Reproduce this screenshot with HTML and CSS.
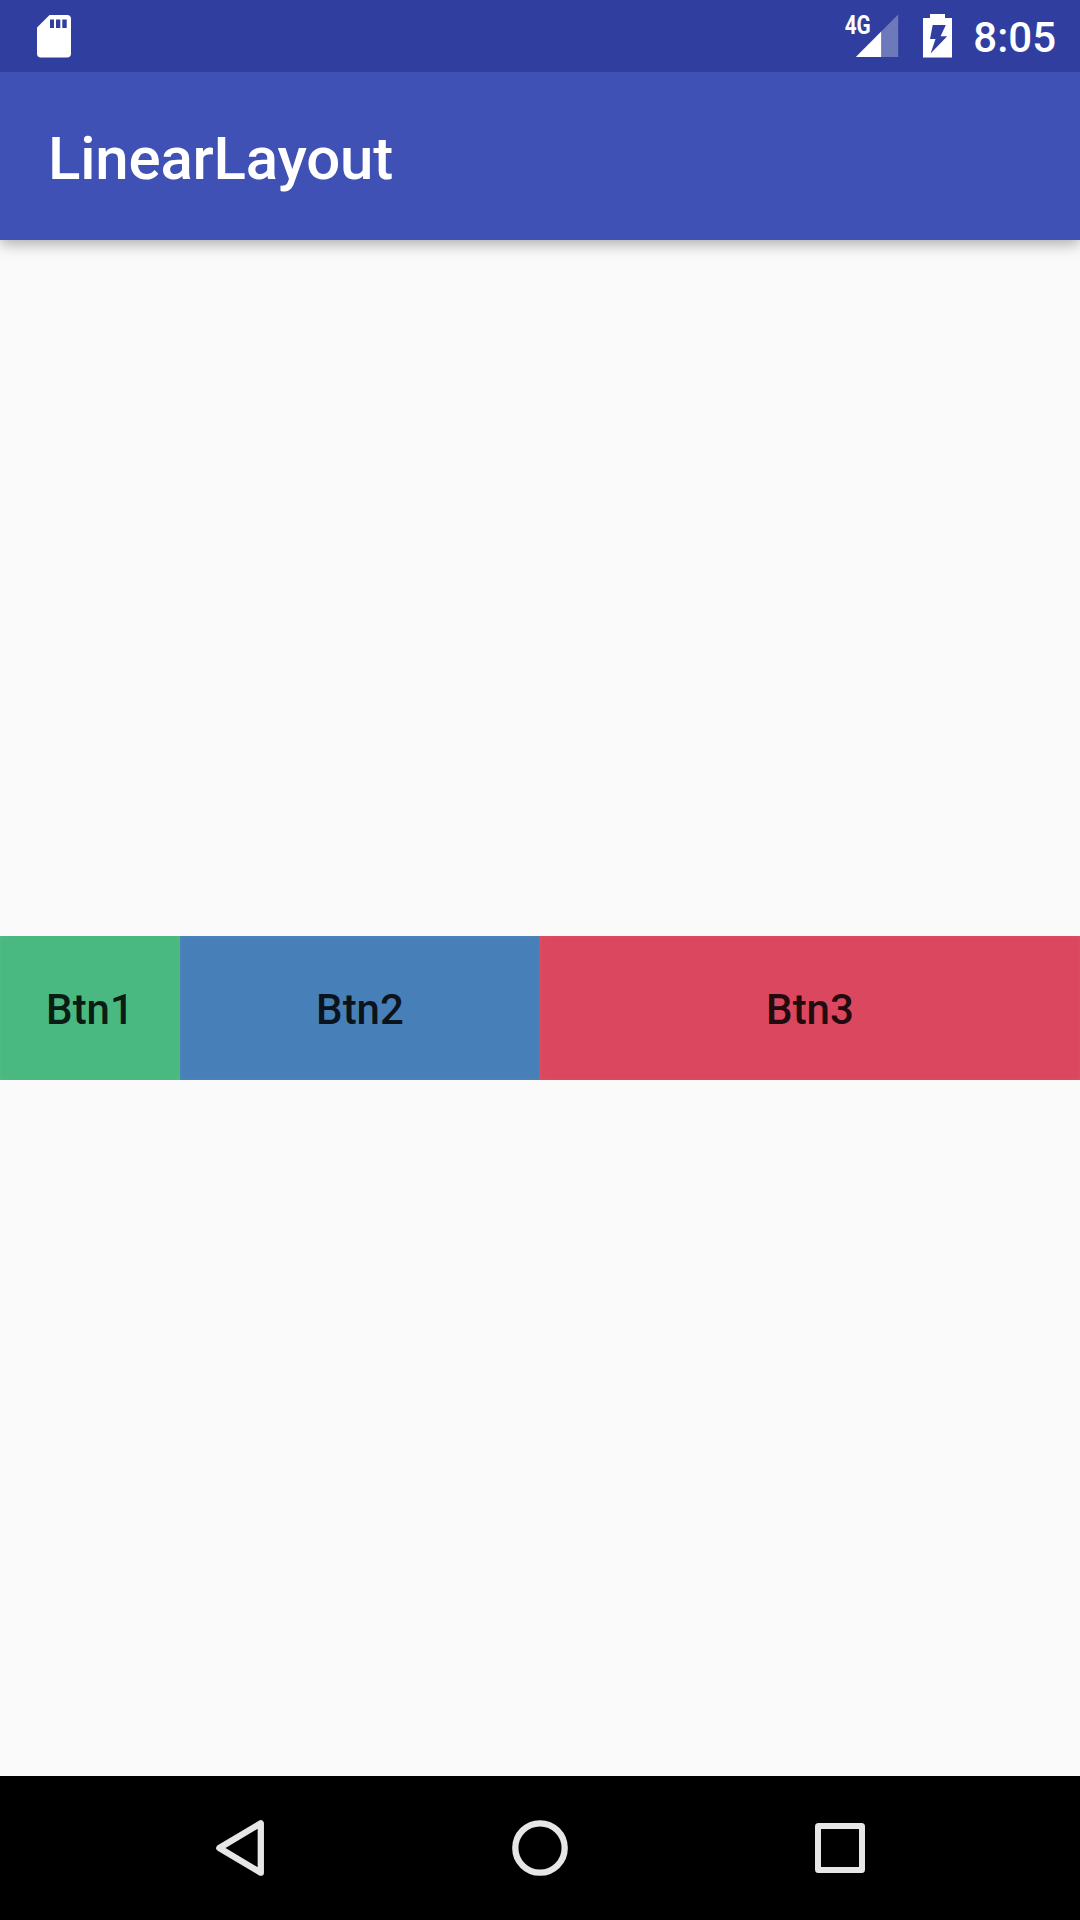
FILE: index.html
```html
<!DOCTYPE html>
<html lang="en">
<head>
<meta charset="utf-8">
<title>LinearLayout</title>
<link rel="stylesheet" href="styles.css">
</head>
<body>
<div class="screen">
  <header class="status-bar">
    <svg class="sd-card" viewBox="0 0 34 43"><path fill-rule="evenodd" d="M12.500 0H30Q34 0 34 4V38.500Q34 42.500 30 42.500H4Q0 42.500 0 38.500V12.500ZM13 4.500V13H17V4.500ZM19 4.500V13H23.300V4.500ZM25.300 4.500V13H29.700V4.500Z"/></svg>
    <div class="indicators">
      <svg class="signal" viewBox="0 0 60 50">
        <path class="signal-off" d="M58.200 6.500V49H41.200V23.500Z"/>
        <path d="M15.800 49L41.200 23.500V49Z"/>
        <text class="network" x="4.700" y="26" textLength="26" lengthAdjust="spacingAndGlyphs">4G</text>
      </svg>
      <svg class="battery" viewBox="0 0 29 44"><path fill-rule="evenodd" d="M7 0H22V4H29V43.500H0V4H7ZM9.700 11L7 25H12.500L7.600 39.500L24.200 22.200H17.600L22.800 11Z"/></svg>
      <span class="clock">8:05</span>
    </div>
  </header>
  <div class="toolbar"><h1 class="title">LinearLayout</h1></div>
  <main class="content">
    <div class="button-row">
      <button class="btn btn-green">Btn1</button>
      <button class="btn btn-blue">Btn2</button>
      <button class="btn btn-red">Btn3</button>
    </div>
  </main>
  <nav class="nav-bar">
    <svg class="nav-icon" viewBox="0 0 60 60"><path d="M9.300 30L50.800 5.300V54.700Z"/></svg>
    <svg class="nav-icon" viewBox="0 0 60 60"><circle cx="30" cy="30" r="24.700"/></svg>
    <svg class="nav-icon" viewBox="0 0 60 60"><path class="nav-fill" fill-rule="evenodd" d="M8.500 5H51.500Q55 5 55 8.500V51.500Q55 55 51.500 55H8.500Q5 55 5 51.500V8.500Q5 5 8.500 5ZM11 11V49H49V11Z"/></svg>
  </nav>
</div>
</body>
</html>
```
FILE: styles.css
```css
* {
  box-sizing: border-box;
}

body {
  margin: 0;
  font-family: Roboto, sans-serif;
  font-weight: 500;
}

.screen {
  display: flex;
  flex-direction: column;
  width: 1080px;
  height: 1920px;
  background: #fafafa;
}

.status-bar {
  position: relative;
  z-index: 1;
  display: flex;
  justify-content: space-between;
  height: 72px;
  padding: 0 24px 0 37px;
  background: #303f9f;
  color: #fff;
  fill: #fff;
}

.sd-card {
  width: 34px;
  height: 43px;
  margin-top: 14.5px;
}

.indicators {
  display: flex;
}

.signal {
  width: 60px;
  height: 50px;
  margin: 8px 23px 0 0;
  overflow: visible;
}

.signal-off {
  opacity: 0.3;
}

.network {
  font-size: 26px;
  font-weight: 700;
}

.battery {
  width: 29px;
  height: 44px;
  margin: 14px 21px 0 0;
}

.clock {
  font-size: 42px;
  line-height: 75px;
}

.toolbar {
  display: flex;
  align-items: center;
  height: 168px;
  padding: 5px 0 0 48px;
  background: #3f51b5;
  box-shadow: 0 4px 14px rgba(0, 0, 0, 0.32);
}

.title {
  margin: 0;
  color: #fff;
  font-size: 60px;
  font-weight: 500;
  letter-spacing: -0.2px;
  line-height: 70px;
}

.content {
  display: flex;
  flex: 1;
  align-items: center;
}

.button-row {
  display: grid;
  grid-template-columns: 1fr 2fr 3fr;
  width: 100%;
  height: 144px;
}

.btn {
  min-width: 0;
  padding: 4px 0 0;
  border: 0;
  box-shadow: inset 0 0 4px rgba(255, 255, 255, 0.06);
  color: rgba(0, 0, 0, 0.87);
  font: 500 42px/50px Roboto, sans-serif;
}

.btn-green {
  background: #49b881;
}

.btn-blue {
  background: #4780b8;
}

.btn-red {
  background: #db475e;
}

.nav-bar {
  display: flex;
  align-items: center;
  justify-content: center;
  gap: 240px;
  height: 144px;
  background: #000;
}

.nav-icon {
  width: 60px;
  height: 60px;
  fill: none;
  stroke: #e6e6e6;
  stroke-width: 6.3;
  stroke-linejoin: round;
}

.nav-fill {
  fill: #e6e6e6;
  stroke: none;
}
```
